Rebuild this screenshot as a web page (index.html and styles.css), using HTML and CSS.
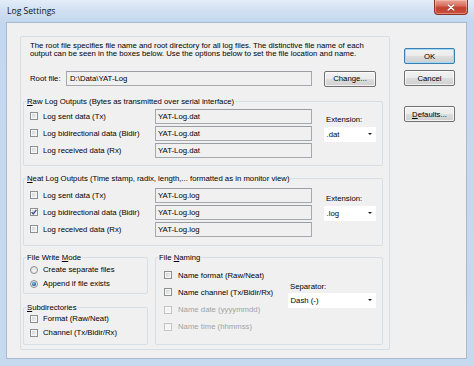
FILE: index.html
```html
<!DOCTYPE html>
<html>
<head>
<meta charset="utf-8">
<title>Log Settings</title>
<link rel="stylesheet" href="styles.css">
</head>
<body>
<div class="window">
  <div class="titlebar">
    <span class="title">Log Settings</span>
    <div class="close"><svg width="8" height="7" viewBox="0 0 8 7"><path d="M1.2 1 L6.8 6 M6.8 1 L1.2 6" stroke="#5a1a12" stroke-width="2.4" stroke-linecap="round" opacity="0.35"/><path d="M1.2 1 L6.8 6 M6.8 1 L1.2 6" stroke="#fff" stroke-width="1.5" stroke-linecap="round"/></svg></div>
  </div>
  <div class="client">
    <div class="panel">
      <p class="desc">The root file specifies file name and root directory for all log files. The distinctive file name of each<br>output can be seen in the boxes below. Use the options below to set the file location and name.</p>
      <div class="root-row">
        <span class="root-label">Root file:</span>
        <div class="tb root-tb">D:\Data\YAT-Log</div>
        <button class="btn change">Change...</button>
      </div>

      <div class="group out raw">
        <div class="gtitle"><u>R</u>aw Log Outputs (Bytes as transmitted over serial interface)</div>
        <div class="gbody">
          <div class="rows">
            <div class="row"><span class="opt"><span class="cb"></span><span>Log sent data (Tx)</span></span><div class="tb">YAT-Log.dat</div></div>
            <div class="row"><span class="opt"><span class="cb"></span><span>Log bidirectional data (Bidir)</span></span><div class="tb">YAT-Log.dat</div></div>
            <div class="row"><span class="opt"><span class="cb"></span><span>Log received data (Rx)</span></span><div class="tb">YAT-Log.dat</div></div>
          </div>
          <div class="ext">
            <div class="ext-label">Extension:</div>
            <div class="combo"><span>.dat</span><span class="arrow"></span></div>
          </div>
        </div>
      </div>

      <div class="group out neat">
        <div class="gtitle"><u>N</u>eat Log Outputs (Time stamp, radix, length,... formatted as in monitor view)</div>
        <div class="gbody">
          <div class="rows">
            <div class="row"><span class="opt"><span class="cb"></span><span>Log sent data (Tx)</span></span><div class="tb">YAT-Log.log</div></div>
            <div class="row"><span class="opt"><span class="cb checked"><svg width="8" height="8" viewBox="0 0 8 8"><path d="M1.6 4.1 L3.3 5.9 L6.4 1.8" fill="none" stroke="#3b4f8a" stroke-width="1.3"/></svg></span><span>Log bidirectional data (Bidir)</span></span><div class="tb">YAT-Log.log</div></div>
            <div class="row"><span class="opt"><span class="cb"></span><span>Log received data (Rx)</span></span><div class="tb">YAT-Log.log</div></div>
          </div>
          <div class="ext">
            <div class="ext-label">Extension:</div>
            <div class="combo"><span>.log</span><span class="arrow"></span></div>
          </div>
        </div>
      </div>

      <div class="bottom">
        <div class="left-col">
          <div class="group mode">
            <div class="gtitle">File Write <u>M</u>ode</div>
            <div class="list">
              <div class="item"><span class="rb"></span><span>Create separate files</span></div>
              <div class="item"><span class="rb on"></span><span>Append if file exists</span></div>
            </div>
          </div>
          <div class="group subdir">
            <div class="gtitle"><u>S</u>ubdirectories</div>
            <div class="list">
              <div class="item"><span class="cb"></span><span>Format (Raw/Neat)</span></div>
              <div class="item"><span class="cb"></span><span>Channel (Tx/Bidir/Rx)</span></div>
            </div>
          </div>
        </div>
        <div class="group naming">
          <div class="gtitle">File <u>N</u>aming</div>
          <div class="naming-body">
            <div class="list">
              <div class="item"><span class="cb"></span><span>Name format (Raw/Neat)</span></div>
              <div class="item"><span class="cb"></span><span>Name channel (Tx/Bidir/Rx)</span></div>
              <div class="item disabled"><span class="cb"></span><span>Name date (yyyymmdd)</span></div>
              <div class="item disabled"><span class="cb"></span><span>Name time (hhmmss)</span></div>
            </div>
            <div class="sep">
              <div class="ext-label">Separator:</div>
              <div class="combo wide"><span>Dash (-)</span><span class="arrow"></span></div>
            </div>
          </div>
        </div>
      </div>
    </div>

    <div class="buttons">
      <button class="btn default">OK</button>
      <button class="btn cancel">Cancel</button>
      <button class="btn defaults"><u>D</u>efaults...</button>
    </div>
  </div>
</div>
</body>
</html>
```

FILE: styles.css
```css
html, body {
  margin: 0;
  padding: 0;
}
body {
  width: 474px;
  height: 366px;
  overflow: hidden;
  font-family: "Liberation Sans", Arial, sans-serif;
  font-size: 7.75px;
  color: #000;
  background: #c7daef;
}
u {
  text-decoration-thickness: 1px;
  text-underline-offset: 1px;
}
.window {
  width: 474px;
  height: 366px;
  box-sizing: border-box;
  padding: 0 7px 7px 6px;
  display: flex;
  flex-direction: column;
  background: linear-gradient(#e3edf8 0px, #d2e1f2 10px, #c3d7ee 22px, #c6d9ef 100%);
}
.titlebar {
  height: 22px;
  flex: none;
  display: flex;
  justify-content: space-between;
  align-items: flex-start;
}
.title {
  font-family: "Open Sans", "Noto Sans", sans-serif;
  font-size: 8.6px;
  line-height: 10px;
  margin: 6px 0 0 1px;
  color: #111;
}
.close {
  width: 34px;
  height: 15px;
  margin-right: -1px;
  box-sizing: border-box;
  border: 1px solid #8a3328;
  border-top: none;
  border-radius: 0 0 4px 4px;
  background: linear-gradient(#e9a598 0%, #d8705f 40%, #c4412f 55%, #c9503c 100%);
  box-shadow: inset 0 0 0 1px rgba(255, 210, 200, 0.45);
  display: flex;
  align-items: center;
  justify-content: center;
}
.client {
  flex: 1;
  display: flex;
  align-items: flex-start;
  background: #f0f0f0;
  border: 1px solid #a7bad0;
}
.panel {
  width: 370px;
  height: 314px;
  box-sizing: border-box;
  margin: 13px 0 0 13px;
  border: 1px solid #d5dfe5;
  border-radius: 2px;
  display: flex;
  flex-direction: column;
  align-items: flex-start;
}
.desc {
  margin: 4.8px 0 0 9px;
  line-height: 8.5px;
  white-space: nowrap;
}
.root-row {
  display: flex;
  align-items: center;
  margin: 12.2px 0 0 9px;
  height: 16px;
}
.root-label {
  width: 36px;
}
.tb {
  box-sizing: border-box;
  height: 15px;
  border: 1px solid #a6a8ab;
  border-top-color: #9a9da2;
  background: #f0f0f0;
  padding-left: 2px;
  display: flex;
  align-items: center;
}
.root-tb {
  width: 246px;
  padding-left: 3px;
}
.btn {
  box-sizing: border-box;
  margin: 0;
  padding: 0;
  height: 16px;
  font-family: inherit;
  font-size: inherit;
  color: #000;
  border: 1px solid #707070;
  border-radius: 2px;
  background: linear-gradient(#f2f2f2 0%, #ebebeb 48%, #dddddd 52%, #cfcfcf 100%);
  box-shadow: inset 0 0 0 1px rgba(255, 255, 255, 0.7);
  text-align: center;
}
.change {
  width: 52px;
  margin-left: 12px;
}
.group {
  box-sizing: border-box;
  border: 1px solid #d5dfe5;
  border-radius: 2px;
  display: flex;
  flex-direction: column;
}
.gtitle {
  align-self: flex-start;
  height: 9px;
  line-height: 9px;
  margin: -5px 0 0 2px;
  padding: 0 1px;
  background: #f0f0f0;
  white-space: nowrap;
}
.out {
  width: 360px;
  margin-left: 2px;
}
.raw {
  margin-top: 14px;
}
.neat {
  margin-top: 12px;
}
.gbody {
  display: flex;
  padding: 3px 6px 7px 6px;
}
.neat .gbody {
  padding-top: 5px;
  padding-bottom: 8px;
}
.rows {
  display: flex;
  flex-direction: column;
  gap: 2px;
}
.row {
  display: flex;
  align-items: center;
  height: 15px;
}
.opt {
  width: 125px;
  display: flex;
  align-items: center;
  gap: 5px;
  white-space: nowrap;
}
.row .tb {
  width: 157px;
}
.cb {
  width: 8px;
  height: 8px;
  box-sizing: border-box;
  flex: none;
  border: 1px solid #8e8f8f;
  background: linear-gradient(135deg, #cdd0d5 0%, #e7e8ea 60%, #f7f7f7 100%);
  box-shadow: inset 0 0 0 1px #f6f6f6;
  position: relative;
}
.cb svg {
  position: absolute;
  left: -1px;
  top: -1px;
}
.rb {
  width: 8px;
  height: 8px;
  box-sizing: border-box;
  flex: none;
  border: 1px solid #8e8f8f;
  border-radius: 50%;
  background: radial-gradient(circle at 60% 60%, #f6f6f6 0%, #d5d7da 100%);
  display: flex;
  align-items: center;
  justify-content: center;
}
.rb.on::after {
  content: "";
  width: 3.6px;
  height: 3.6px;
  border-radius: 50%;
  background: radial-gradient(circle at 40% 35%, #8dc3ec 0%, #2c6aa3 60%, #1c4d80 100%);
}
.ext {
  width: 52px;
  margin-left: 12px;
  padding-top: 6.5px;
  display: flex;
  flex-direction: column;
}
.ext-label {
  height: 9px;
  line-height: 9px;
  padding-left: 2px;
}
.combo {
  box-sizing: border-box;
  height: 15px;
  margin-top: 2.5px;
  background: #fff;
  display: flex;
  align-items: center;
  justify-content: space-between;
  padding: 0 4px 0 2.5px;
}
.arrow {
  width: 0;
  height: 0;
  border-left: 2.2px solid transparent;
  border-right: 2.2px solid transparent;
  border-top: 2.4px solid #1a1a1a;
}
.combo.wide {
  width: 88px;
  margin-top: 1.5px;
}
.bottom {
  display: flex;
  align-items: flex-start;
  margin: 11px 0 0 2px;
}
.left-col {
  width: 125px;
  display: flex;
  flex-direction: column;
}
.list {
  display: flex;
  flex-direction: column;
}
.item {
  display: flex;
  align-items: center;
  gap: 5px;
  height: 14px;
  white-space: nowrap;
}
.mode .list {
  margin: 1px 0 2px 6px;
}
.subdir {
  margin-top: 13px;
}
.subdir .list {
  margin: 0 0 4px 6px;
}
.naming {
  width: 228px;
  height: 88px;
  margin-left: 7px;
}
.naming-body {
  display: flex;
  justify-content: space-between;
  padding: 0 6px 0 8px;
}
.naming .list {
  margin-top: 4.4px;
}
.naming .item {
  height: 17.3px;
  gap: 6px;
}
.item.disabled {
  color: #a3a3a3;
}
.item.disabled .cb {
  border-color: #c3c5c7;
  background: #f4f4f4;
}
.sep {
  padding-top: 20.5px;
  display: flex;
  flex-direction: column;
}
.buttons {
  width: 51px;
  margin-left: 14px;
  display: flex;
  flex-direction: column;
}
.default {
  margin-top: 25px;
  border-color: #3c7fb1;
  box-shadow: inset 0 0 0 1px #9edbf6;
}
.cancel {
  margin-top: 6px;
}
.defaults {
  margin-top: 20px;
}
```
